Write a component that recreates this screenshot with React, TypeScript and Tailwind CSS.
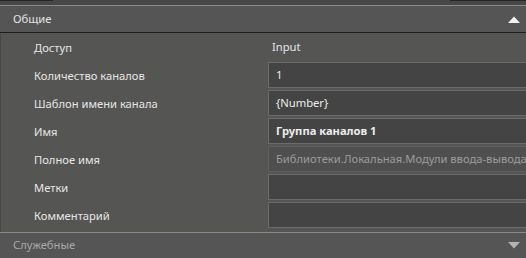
import React from 'react';

// Свойства группы каналов
const rows: { label: string; value: string; kind: 'plain' | 'input' | 'bold' | 'readonly' }[] = [
  { label: 'Доступ', value: 'Input', kind: 'plain' },
  { label: 'Количество каналов', value: '1', kind: 'input' },
  { label: 'Шаблон имени канала', value: '{Number}', kind: 'input' },
  { label: 'Имя', value: 'Группа каналов 1', kind: 'bold' },
  { label: 'Полное имя', value: 'Библиотеки.Локальная.Модули ввода-вывода.Группа каналов 1', kind: 'readonly' },
  { label: 'Метки', value: '', kind: 'input' },
  { label: 'Комментарий', value: '', kind: 'input' },
];

const App: React.FC = () => {
  return (
    <div
      className="w-[526px] h-[258px] overflow-hidden bg-[#555554] text-[11.2px] flex flex-col"
      style={{ fontFamily: '"Noto Sans", "Open Sans", sans-serif' }}
    >
      {/* Верхняя полоса */}
      <div className="h-[5px] bg-[#474747] flex">
        <div className="w-[53px] h-[1px] bg-[#262626]" />
        <div className="flex-1" />
        <div className="w-[76px] h-[1px] bg-[#262626]" />
      </div>
      <div className="h-[1px] bg-[#8a8a8a]" />

      {/* Заголовок "Общие" */}
      <div className="h-[26px] flex items-center justify-between pl-[13px] pr-[6px] bg-[#555555]">
        <span className="text-[#e4e4e4] pt-[1px]">Общие</span>
        <svg width="12" height="7" viewBox="0 0 12 7">
          <polygon points="0,7 6,0.5 12,7" fill="#f2f2f2" />
        </svg>
      </div>
      <div className="h-[1px] bg-[#1c1c1c]" />

      {/* Свойства */}
      <div className="flex-1 border-l border-[#484848] pt-[1px]">
        {rows.map((row) => (
          <div key={row.label} className="h-[28px] flex">
            <div className="w-[267px] shrink-0 pl-[33px] flex items-center text-[#e6e6e6]">{row.label}</div>
            <div className="flex-1 min-w-0 pb-[2px]">
              {row.kind === 'plain' && (
                <div className="h-full pl-[4px] flex items-center text-[#e6e6e6]">{row.value}</div>
              )}
              {(row.kind === 'input' || row.kind === 'bold') && (
                <div
                  className={`h-[26px] border border-r-0 border-[#6b6b6b] bg-[#444444] pl-[7px] flex items-center whitespace-nowrap text-[#ececec] ${
                    row.kind === 'bold' ? 'font-bold' : ''
                  }`}
                >
                  {row.value}
                </div>
              )}
              {row.kind === 'readonly' && (
                <div className="h-[26px] border border-r-0 border-[#606060] bg-[#4f4f4f] pl-[7px] flex items-center whitespace-nowrap overflow-hidden text-[#9c9c9c]">
                  {row.value}
                </div>
              )}
            </div>
          </div>
        ))}
      </div>

      {/* Заголовок "Служебные" */}
      <div className="h-[1px] bg-[#8a8a8a]" />
      <div className="h-[25px] flex items-center justify-between pl-[13px] pr-[6px] bg-[#555555]">
        <span className="text-[#a8a8a8]">Служебные</span>
        <svg width="12" height="7" viewBox="0 0 12 7">
          <polygon points="0,0 12,0 6,6.5" fill="#b4b4b4" />
        </svg>
      </div>
    </div>
  );
};

export default App;
